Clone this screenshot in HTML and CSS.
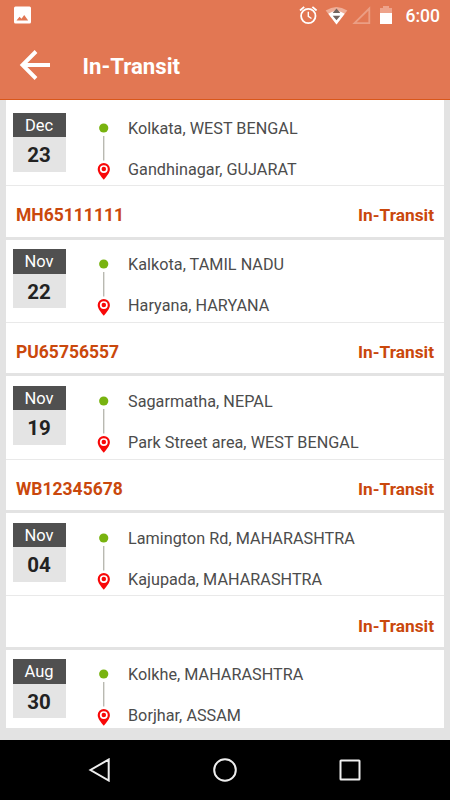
FILE: index.html
```html
<!DOCTYPE html>
<html lang="en">
<head>
<meta charset="utf-8">
<title>In-Transit</title>
<link rel="stylesheet" href="styles.css">
</head>
<body>
<svg class="defs" width="0" height="0">
  <symbol id="route" viewBox="0 0 14 60">
    <circle cx="6.700" cy="6" r="4.600" fill="#78b30f"/>
    <path d="M6.700 14V38.500" stroke="#b9b9b1" stroke-width="1.400"/>
    <path d="M6.800 41a6.100 6.100 0 0 0-6.100 6.100C.7 51 4 54.500 6.800 57.700c2.800-3.200 6.100-6.700 6.100-10.600A6.100 6.100 0 0 0 6.800 41z" fill="#f80808"/>
    <circle cx="6.800" cy="47.100" r="3.100" fill="none" stroke="#fff" stroke-width="1.700"/>
  </symbol>
</svg>
<div class="phone">
  <header class="header">
    <div class="status">
      <svg class="photo" width="17" height="18" viewBox="0 0 17 18"><rect width="17" height="17" y=".5" rx="1.500" fill="#fff"/><path d="M2.500 14.500l3-3.700 2 2 2.700-3.800 4 5.500z" fill="#e27753"/></svg>
      <svg class="indicators" width="96" height="20" viewBox="0 0 96 20">
        <g fill="none" stroke="#fff">
          <circle cx="9.300" cy="11" r="7.200" stroke-width="1.800"/>
          <path d="M9.300 6.700v4.600l3.200 2.200" stroke-width="1.400"/>
          <path d="M1 5.500l4.200-3.600M17.600 5.500l-4.200-3.600" stroke-width="1.800"/>
        </g>
        <path d="M26.700 5.500Q37.500-1.500 48.300 5.500L37.500 19.500z" fill="#efae98"/>
        <path d="M29.300 8.700Q37.500 3.500 45.700 8.700L37.500 19.500z" fill="#fff"/>
        <path d="M33.700 8l3.800-4.500L41.300 8zM33.700 10.800h7.600l-3.800 4.500z" fill="#71645f"/>
        <path d="M55.500 18.200H70.300V3.500z" fill="none" stroke="#eb9e84" stroke-width="1.800"/>
        <path d="M81 3h3V1h6v2h3v6H81z" fill="#eea38b"/>
        <path d="M81 8h12v11H81z" fill="#fff"/>
      </svg>
      <span class="clock">6:00</span>
    </div>
    <div class="toolbar">
      <svg width="32" height="32" viewBox="0 0 32 32" fill="none" stroke="#fff" stroke-width="3.900"><path d="M31 16H4M17 2.500L3.500 16l13.500 13.500"/></svg>
      <h1>In-Transit</h1>
    </div>
  </header>
  <main class="list">
    <article class="card">
      <div class="trip">
        <div class="date"><span class="month">Dec</span><span class="day">23</span></div>
        <svg class="route"><use href="#route"/></svg>
        <div class="places"><span>Kolkata, WEST BENGAL</span><span>Gandhinagar, GUJARAT</span></div>
      </div>
      <div class="info"><span class="vehicle">MH65111111</span><span class="state">In-Transit</span></div>
    </article>
    <article class="card">
      <div class="trip">
        <div class="date"><span class="month">Nov</span><span class="day">22</span></div>
        <svg class="route"><use href="#route"/></svg>
        <div class="places"><span>Kalkota, TAMIL NADU</span><span>Haryana, HARYANA</span></div>
      </div>
      <div class="info"><span class="vehicle">PU65756557</span><span class="state">In-Transit</span></div>
    </article>
    <article class="card">
      <div class="trip">
        <div class="date"><span class="month">Nov</span><span class="day">19</span></div>
        <svg class="route"><use href="#route"/></svg>
        <div class="places"><span>Sagarmatha, NEPAL</span><span>Park Street area, WEST BENGAL</span></div>
      </div>
      <div class="info"><span class="vehicle">WB12345678</span><span class="state">In-Transit</span></div>
    </article>
    <article class="card">
      <div class="trip">
        <div class="date"><span class="month">Nov</span><span class="day">04</span></div>
        <svg class="route"><use href="#route"/></svg>
        <div class="places"><span>Lamington Rd, MAHARASHTRA</span><span>Kajupada, MAHARASHTRA</span></div>
      </div>
      <div class="info"><span class="vehicle"></span><span class="state">In-Transit</span></div>
    </article>
    <article class="card">
      <div class="trip">
        <div class="date"><span class="month">Aug</span><span class="day">30</span></div>
        <svg class="route"><use href="#route"/></svg>
        <div class="places"><span>Kolkhe, MAHARASHTRA</span><span>Borjhar, ASSAM</span></div>
      </div>
    </article>
  </main>
  <nav class="navbar">
    <svg width="24" height="24" viewBox="0 0 24 24"><path d="M20.700 1.500v21L2.500 12z"/></svg>
    <svg width="24" height="24" viewBox="0 0 24 24"><circle cx="12" cy="12" r="10.800"/></svg>
    <svg width="24" height="24" viewBox="0 0 24 24"><rect x="2.500" y="2.500" width="19" height="19" rx=".5"/></svg>
  </nav>
</div>
</body>
</html>
```

FILE: styles.css
```css
* { box-sizing: border-box; }
body { margin: 0; font-family: Roboto, sans-serif; }
.defs { display: block; }
.phone {
  width: 450px;
  height: 800px;
  display: flex;
  flex-direction: column;
  background: #e3e3e3;
  overflow: hidden;
}
.header {
  flex: none;
  height: 100px;
  background: #e27753;
  border-bottom: 1px solid #d9571a;
  color: #fff;
}
.status {
  height: 32px;
  display: flex;
  align-items: flex-start;
  padding: 5px 10px 0 14px;
}
.photo { margin-top: 1px; }
.indicators { margin-left: auto; margin-right: 11px; }
.clock { font-size: 17.5px; line-height: 22px; font-weight: 500; }
.toolbar {
  height: 66px;
  display: flex;
  align-items: center;
  padding-left: 19px;
}
h1 { margin: 1px 0 0 31.5px; font-size: 22.200px; line-height: 26px; font-weight: 700; }
.list {
  flex: none;
  height: 627.5px;
  margin: 0 6px;
  display: flex;
  flex-direction: column;
  gap: 3px;
  overflow: hidden;
}
.card { flex: none; height: 133.7px; background: #fff; }
.card:first-child { height: 136.7px; padding-top: 3px; }
.trip {
  height: 83.200px;
  padding: 9.500px 6.500px 0;
  display: flex;
  align-items: flex-start;
  border-bottom: 1px solid #e9e9e9;
}
.card:last-child .trip { border-bottom: 0; }
.date {
  width: 53px;
  height: 59px;
  display: flex;
  flex-direction: column;
  background: #e4e4e4;
  text-align: center;
}
.month {
  height: 24.500px;
  background: #505050;
  color: #fff;
  font-size: 16.500px;
  line-height: 26px;
}
.day { color: #222; font-size: 20.500px; font-weight: 700; line-height: 37px; }
.route { width: 14px; height: 60px; margin: 9px 0 0 31px; }
.places {
  display: flex;
  flex-direction: column;
  gap: 19px;
  margin: 5.200px 0 0 17.500px;
  color: #4c4c4c;
  font-size: 16.200px;
  letter-spacing: 0.03px;
  line-height: 22px;
  white-space: nowrap;
}
.info {
  height: 50.500px;
  display: flex;
  justify-content: space-between;
  align-items: center;
  padding: 8px 10px 0;
  color: #ca480c;
  font-size: 17.500px;
  font-weight: 700;
}
.state { font-size: 17.300px; }
.navbar {
  margin-top: auto;
  height: 60px;
  display: flex;
  justify-content: center;
  align-items: center;
  gap: 101px;
  background: #000;
}
.navbar svg { fill: none; stroke: #eee; stroke-width: 2; }
```
